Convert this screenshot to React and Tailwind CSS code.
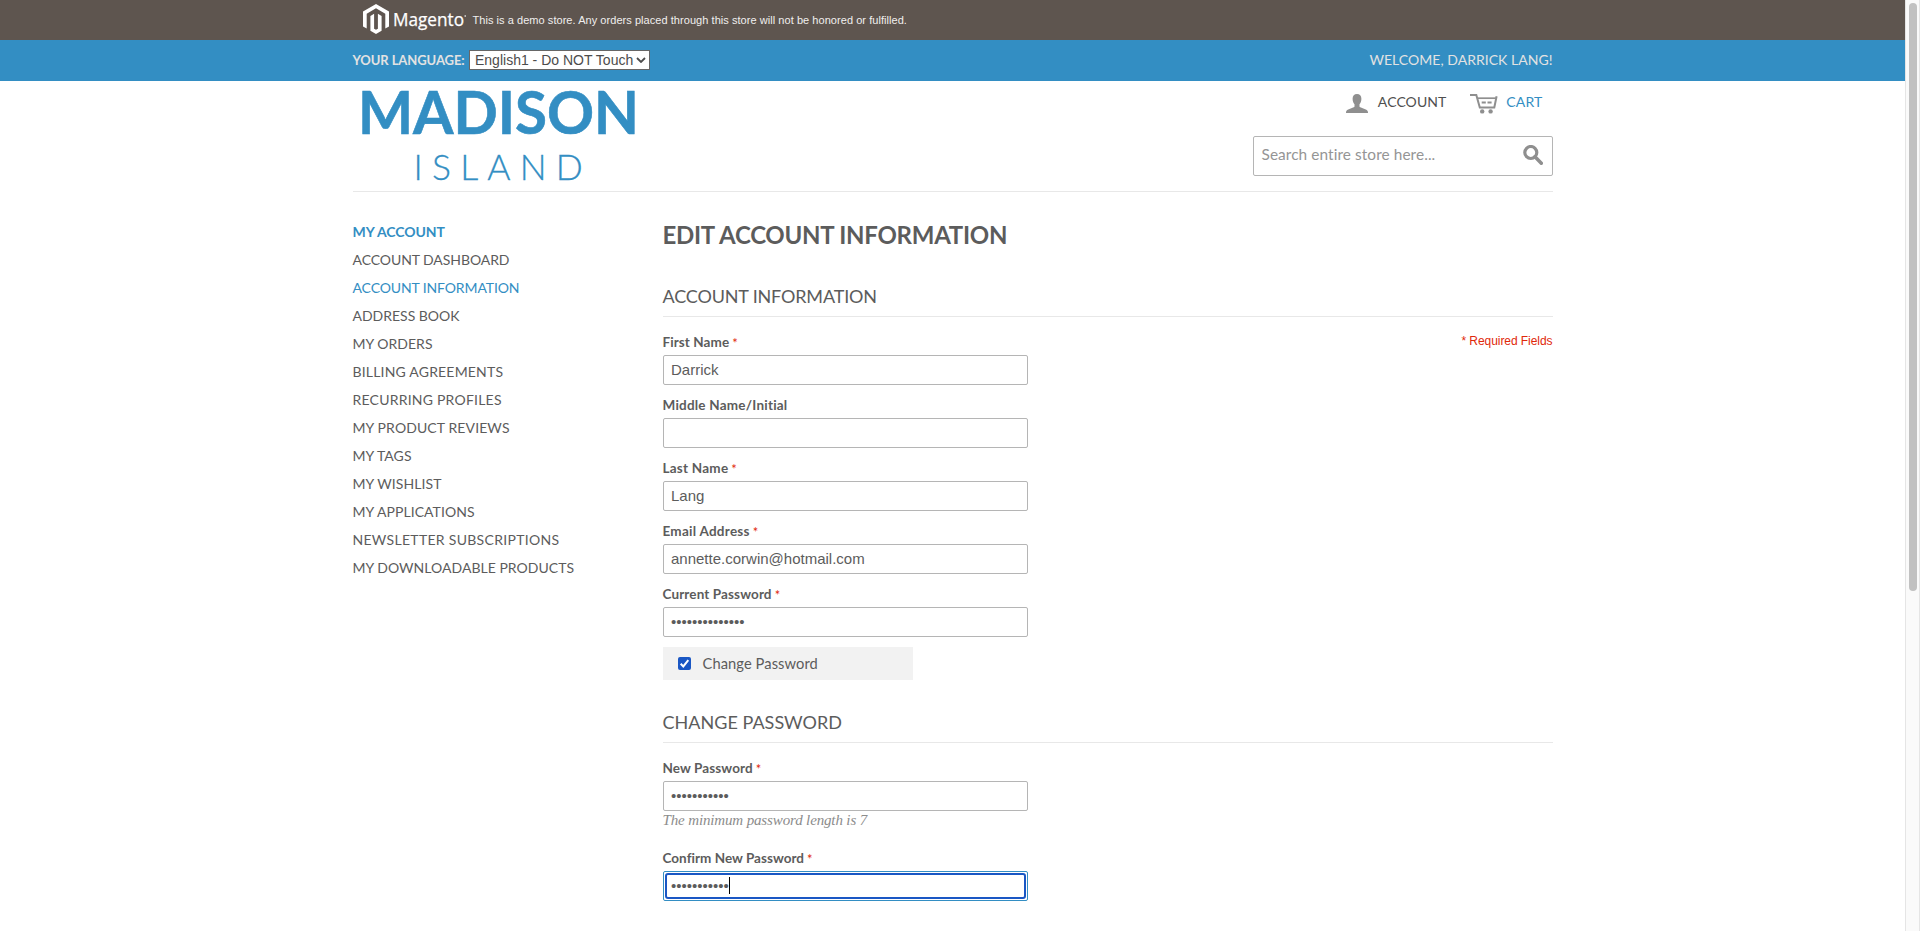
import React from 'react';

const navItems = [
  { label: 'ACCOUNT DASHBOARD', cls: 'tracking-[-0.074px]' },
  { label: 'ACCOUNT INFORMATION', cls: 'tracking-[-0.119px] text-[#338ec3]' },
  { label: 'ADDRESS BOOK', cls: 'tracking-[-0.014px]' },
  { label: 'MY ORDERS', cls: 'tracking-[0.02px]' },
  { label: 'BILLING AGREEMENTS', cls: 'tracking-[0.189px]' },
  { label: 'RECURRING PROFILES', cls: 'tracking-[0.221px]' },
  { label: 'MY PRODUCT REVIEWS', cls: 'tracking-[0.109px]' },
  { label: 'MY TAGS', cls: 'tracking-[0.052px]' },
  { label: 'MY WISHLIST', cls: 'tracking-[0.075px]' },
  { label: 'MY APPLICATIONS', cls: 'tracking-[0.056px]' },
  { label: 'NEWSLETTER SUBSCRIPTIONS', cls: 'tracking-[0.296px]' },
  { label: 'MY DOWNLOADABLE PRODUCTS', cls: 'tracking-[0.023px]' },
];

function MagentoMark() {
  return (
    <svg className="h-[30px] w-[26px] shrink-0" viewBox="0 0 26 30" fill="#fff">
      <path d="M13 0 26 7.5v15l-3.7 2.1V9.7L13 4.3 3.7 9.7v14.9L0 22.500v-15z" />
      <path d="M7.400 11.900 11.100 9.700v15l1.900 1.100 1.900-1.100v-15l3.700 2.200v14.900L13 30l-5.600-3.200z" />
    </svg>
  );
}

function MadisonLogo() {
  return (
    <svg
      className="ml-[8.500px] block h-[110px] w-[290px] font-['Lato',sans-serif]"
      viewBox="0 0 290 110"
      fill="#338ec3"
    >
      <text x="-3" y="53" fontSize="59.5" fontWeight="700" textLength="281" lengthAdjust="spacingAndGlyphs" stroke="#338ec3" strokeWidth=".6">MADISON</text>
      <text x="52.500" y="99" fontSize="35.500" fontWeight="300" letterSpacing="9.200" stroke="#338ec3" strokeWidth=".3">ISLAND</text>
    </svg>
  );
}

function AccountIcon() {
  return (
    <svg className="h-[19px] w-[22px] shrink-0" viewBox="0 0 22 19" fill="#8f8f8f">
      <path d="M11 0c2.800 0 4.400 1.900 4.400 4.700 0 2.400-.8 4.400-1.900 5.600v2.100c0 .5.3.7.8.9l5.500 2.100c1.500.6 2.200 1.500 2.200 3v.6H0v-.6c0-1.500.7-2.400 2.200-3l5.500-2.100c.5-.2.8-.4.8-.9v-2.100C7.400 9.100 6.600 7.100 6.600 4.700 6.600 1.900 8.200 0 11 0z" />
    </svg>
  );
}

function CartIcon() {
  return (
    <svg className="h-[20px] w-[28px] shrink-0" viewBox="0 0 28 20" fill="none" stroke="#8f8f8f">
      <path d="M0 1.100H6.300L9.800 13.400H24.300L26.600 2.200" strokeWidth="2" />
      <path d="M7.200 4.200H26" strokeWidth="1.700" />
      <path d="M11.700 8.500h4.100M17.500 8.500h4.100" strokeWidth="1.800" />
      <circle cx="12.200" cy="17.400" r="2.200" fill="#8f8f8f" stroke="none" />
      <circle cx="20.600" cy="17.400" r="2.200" fill="#8f8f8f" stroke="none" />
    </svg>
  );
}

function SearchIcon() {
  return (
    <svg className="h-[20px] w-[20px] shrink-0" viewBox="0 0 20 20" fill="none" stroke="#8f8f8f">
      <circle cx="7.800" cy="7.500" r="6" strokeWidth="3.200" />
      <path d="M12 11.800l6.300 6.500" strokeWidth="3.500" strokeLinecap="round" />
    </svg>
  );
}

function Field({ label, labelClass, required, value, secret, focused, className = '' }) {
  return (
    <div className={className}>
      <div className="flex h-[26px] items-center pt-[2px] text-[13.500px] font-bold leading-none">
        <span className={labelClass}>{label}</span>
        {required && <span className="ml-[3px] text-[13px] font-normal text-[#df280a]">*</span>}
      </div>
      <div
        className={
          'h-[30px] w-[365px] rounded-[2px] border p-[1px] ' +
          (focused ? 'border-[#338ec3]' : 'border-[#b5b5b5]')
        }
      >
        <div
          className={
            'flex h-full items-center rounded-[3px] font-["Liberation_Sans",sans-serif] text-[15px] leading-none ' +
            (focused ? 'border-2 border-[#1a57c4] pl-[4.500px]' : 'pl-[6.500px]')
          }
        >
          <span className="pb-[2px]">{secret ? '•'.repeat(secret) : value}</span>
          {focused && <span className="mb-px h-[17px] w-px bg-black" />}
        </div>
      </div>
    </div>
  );
}

function SectionTitle({ children, className }) {
  return (
    <h2 className={'flex h-[42px] items-center border-b border-[#e8e8e8] pt-[1px] text-[18px] font-normal ' + className}>
      {children}
    </h2>
  );
}

export default function App() {
  return (
    <div className="flex h-[931px] w-[1920px] overflow-hidden bg-white font-['Lato',sans-serif] text-[14px] text-[#5c5c5c]">
      <div className="w-[1905px] shrink-0">
        <div className="h-[40px] bg-[#5e554f]">
          <div className="ml-[352.500px] flex h-[40px] w-[1200px] items-center pl-[10.500px]">
            <div className="mb-[2px]"><MagentoMark /></div>
            <svg className="ml-[4px] h-[30px] w-[76px] font-['Open_Sans',sans-serif]" viewBox="0 0 76 30" fill="#fff">
              <text x="0" y="20.500" fontSize="18" fontWeight="500" textLength="71" lengthAdjust="spacingAndGlyphs" stroke="#fff" strokeWidth=".25">Magento</text>
              <circle cx="72.200" cy="11" r=".8" />
            </svg>
            <p className="ml-[3.500px] whitespace-nowrap font-['Liberation_Sans',sans-serif] text-[11px] tracking-[0.050px] text-[#f0efee]">
              This is a demo store. Any orders placed through this store will not be honored or fulfilled.
            </p>
          </div>
        </div>

        <div className="h-[41px] bg-[#338ec3]">
          <div className="ml-[352.500px] flex h-[40px] w-[1200px] items-center text-[#e2e2e2]">
            <span className="w-[116.500px] whitespace-nowrap pt-[2px] text-[13px] font-bold tracking-[-0.080px]">YOUR LANGUAGE:</span>
            <div className="flex h-[20px] w-[180.500px] items-center justify-between border border-[#666] bg-white pl-[5px] pr-[3px] font-['Liberation_Sans',sans-serif] text-[14px] leading-none text-[#4c4c4c]">
              <span className="whitespace-nowrap">English1 - Do NOT Touch</span>
              <svg className="h-[6px] w-[10px]" viewBox="0 0 10 6" fill="none" stroke="#4c4c4c" strokeWidth="1.800">
                <path d="M1 1l4 4 4-4" />
              </svg>
            </div>
            <span className="ml-auto pb-[2px] tracking-[0.029px]">WELCOME, DARRICK LANG!</span>
          </div>
        </div>

        <header className="ml-[352.500px] flex h-[111px] w-[1200px] justify-between border-b border-[#e8e8e8]">
          <MadisonLogo />
          <div className="flex w-[300px] flex-col">
            <div className="flex h-[43px] items-center justify-end pb-[2px] pr-[10px]">
              <div className="mt-[4px]"><AccountIcon /></div>
              <span className="ml-[10px] w-[92.500px] tracking-[0.083px] text-[#4f4f4f]">ACCOUNT</span>
              <div className="mt-[4px]"><CartIcon /></div>
              <span className="ml-[8px] tracking-[0.151px] text-[#338ec3]">CART</span>
            </div>
            <div className="mt-[12px] flex h-[40px] w-[300px] items-center justify-between rounded-[2px] border border-[#b5b5b5] pb-[2px] pl-[8px] pr-[9px]">
              <span className="text-[15.400px] tracking-[0.080px] text-[#959595]">Search entire store here...</span>
              <SearchIcon />
            </div>
          </div>
        </header>

        <div className="ml-[352.500px] flex w-[1200px]">
          <aside className="w-[310px] shrink-0 pt-[25px]">
            <div className="flex h-[28px] items-center font-bold tracking-[-0.086px] text-[#338ec3]">MY ACCOUNT</div>
            <ul>
              {navItems.map((item) => (
                <li key={item.label} className={'flex h-[28px] items-center whitespace-nowrap ' + item.cls}>
                  {item.label}
                </li>
              ))}
            </ul>
          </aside>

          <main className="w-[890px]">
            <h1 className="mt-[28px] flex h-[30px] items-center text-[24px] font-bold tracking-[-0.270px]">
              EDIT ACCOUNT INFORMATION
            </h1>
            <SectionTitle className="mt-[25px] tracking-[-0.165px]">ACCOUNT INFORMATION</SectionTitle>
            <div className="flex justify-between pt-[12px]">
              <div className="flex flex-col gap-[7px]">
                <Field label="First Name" labelClass="tracking-[0.080px]" required value="Darrick" />
                <Field label="Middle Name/Initial" labelClass="tracking-[0.220px]" value="" />
                <Field label="Last Name" labelClass="tracking-[0.240px]" required value="Lang" />
                <Field label="Email Address" labelClass="tracking-[0.260px]" required value="annette.corwin@hotmail.com" />
                <Field label="Current Password" labelClass="tracking-[0.120px]" required secret={14} />
              </div>
              <p className="mt-[3px] font-['Liberation_Sans',sans-serif] text-[12px] tracking-[-0.060px] text-[#df280a]">
                * Required Fields
              </p>
            </div>
            <div className="mt-[10px] flex h-[33px] w-[250px] items-center bg-[#f2f2f2] pb-px pl-[15.500px]">
              <svg className="h-[13px] w-[13px]" viewBox="0 0 13 13">
                <rect width="13" height="13" rx="2" fill="#1a57c4" />
                <path d="M2.700 6.700l2.600 2.700 5-6.300" fill="none" stroke="#fff" strokeWidth="2" />
              </svg>
              <span className="ml-[11.500px] text-[14.700px] tracking-[0.080px]">Change Password</span>
            </div>

            <SectionTitle className="mt-[21px] tracking-[0.017px]">CHANGE PASSWORD</SectionTitle>
            <Field className="mt-[12px]" label="New Password" labelClass="tracking-[0.100px]" required secret={11} />
            <p className="flex h-[20px] items-center whitespace-nowrap pb-[2px] font-['Liberation_Serif',serif] text-[15px] italic tracking-[-0.140px] text-[#8c8c8c]">
              The minimum password length is 7
            </p>
            <Field className="mt-[14px]" label="Confirm New Password" labelClass="tracking-[0.030px]" required secret={11} focused />
          </main>
        </div>
      </div>

      <div className="w-[15px] shrink-0 border-x border-[#e5e5e5] bg-[#fafafa] pl-[3px] pt-[3px]">
        <div className="h-[588px] w-[8px] rounded-full bg-[#c1c1c1]" />
      </div>
    </div>
  );
}
